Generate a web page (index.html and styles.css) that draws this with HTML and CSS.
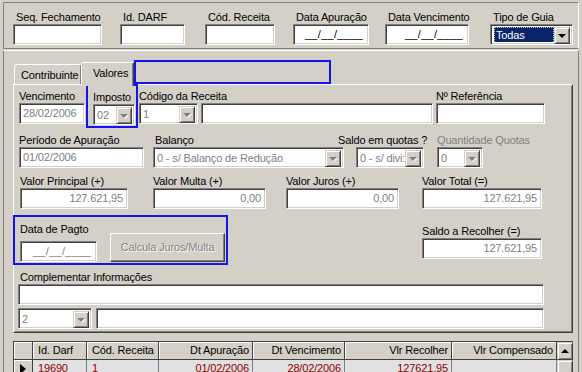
FILE: index.html
```html
<!DOCTYPE html>
<html>
<head>
<meta charset="utf-8">
<link rel="stylesheet" href="styles.css">
</head>
<body>
<div class="top">
  <div class="tf w-seq"><div class="tl">Seq. Fechamento</div><div class="sunk"></div></div>
  <div class="tf w-id"><div class="tl">Id. DARF</div><div class="sunk"></div></div>
  <div class="tf w-cod"><div class="tl">Cód. Receita</div><div class="sunk"></div></div>
  <div class="tf w-dap"><div class="tl">Data Apuração</div><div class="sunk mask">__/__/____</div></div>
  <div class="tf w-dve"><div class="tl">Data Vencimento</div><div class="sunk mask">__/__/____</div></div>
  <div class="tf w-tipo"><div class="tl">Tipo de Guia</div>
    <div class="sunk combo"><div class="cval"><span class="sel">Todas</span></div><div class="cbtn"><i class="arr"></i></div></div>
  </div>
</div>

<div class="main">
  <div class="tabs">
    <div class="tab">Contribuinte</div>
    <div class="tab active">Valores</div>
  </div>
  <div class="page">
    <div class="row r1">
      <div class="fld w-venc pt"><div class="lbl">Vencimento</div><div class="sunk dis">28/02/2006</div></div>
      <div class="bluebox bb1">
        <div class="fld w-imp"><div class="lbl">Imposto</div>
          <div class="sunk combo dis"><div class="cval">02</div><div class="cbtn"><i class="arr off"></i></div></div>
        </div>
      </div>
      <div class="fld w-codr pt"><div class="lbl nw">Código da Receita</div>
        <div class="sunk combo dis"><div class="cval">1</div><div class="cbtn"><i class="arr off"></i></div></div>
      </div>
      <div class="fld w-codt pt"><div class="lbl"></div><div class="sunk"></div></div>
      <div class="fld w-ref pt"><div class="lbl">Nº Referência</div><div class="sunk"></div></div>
    </div>

    <div class="row r2">
      <div class="fld w-per"><div class="lbl">Período de Apuração</div><div class="sunk dis">01/02/2006</div></div>
      <div class="fld w-bal"><div class="lbl l2">Balanço</div>
        <div class="sunk combo dis"><div class="cval">0 - s/ Balanço de Redução</div><div class="cbtn"><i class="arr off"></i></div></div>
      </div>
      <div class="fld w-sq"><div class="lbl nw sql">Saldo em quotas ?</div>
        <div class="sunk combo dis"><div class="cval clip">0 - s/ divi:</div><div class="cbtn"><i class="arr off"></i></div></div>
      </div>
      <div class="fld w-qq"><div class="lbl nw gray">Quantidade Quotas</div>
        <div class="sunk combo dis"><div class="cval">0</div><div class="cbtn"><i class="arr off"></i></div></div>
      </div>
    </div>

    <div class="row r3">
      <div class="fld w-vp"><div class="lbl nw">Valor Principal (+)</div><div class="sunk dis num">127.621,95</div></div>
      <div class="fld w-vm"><div class="lbl nw">Valor Multa (+)</div><div class="sunk dis num">0,00</div></div>
      <div class="fld w-vj"><div class="lbl nw">Valor Juros (+)</div><div class="sunk dis num">0,00</div></div>
      <div class="fld w-vt"><div class="lbl nw">Valor Total (=)</div><div class="sunk dis num">127.621,95</div></div>
    </div>

    <div class="row r4">
      <div class="bluebox bb2">
        <div class="fld w-dp"><div class="lbl dpl">Data de Pagto</div><div class="sunk mask dis">__/__/____</div></div>
        <div class="btn">Calcula Juros/Multa</div>
      </div>
      <div class="fld w-sr"><div class="lbl nw">Saldo a Recolher (=)</div><div class="sunk dis num">127.621,95</div></div>
    </div>

    <div class="row r5">
      <div class="fld w-ci"><div class="lbl nw">Complementar Informações</div><div class="sunk"></div></div>
    </div>

    <div class="row r6">
      <div class="sunk combo dis w-c2"><div class="cval">2</div><div class="cbtn"><i class="arr off"></i></div></div>
      <div class="sunk w-c2t"></div>
    </div>
  </div>

  <div class="grid">
    <div class="hc"></div>
    <div class="hc">Id. Darf</div>
    <div class="hc">Cód. Receita</div>
    <div class="hc rt">Dt Apuração</div>
    <div class="hc rt">Dt Vencimento</div>
    <div class="hc rt">Vlr Recolher</div>
    <div class="hc rt">Vlr Compensado</div>
    <div class="sb-up"><i class="uarr"></i></div>

    <div class="ind"><i class="rarr"></i></div>
    <div class="dc">19690</div>
    <div class="dc">1</div>
    <div class="dc rt">01/02/2006</div>
    <div class="dc rt">28/02/2006</div>
    <div class="dc rt">127621.95</div>
    <div class="dc rt"></div>
    <div class="sb-th"></div>
  </div>
</div>

<div class="blue-over"></div>
</body>
</html>
```

FILE: styles.css
```css
html, body {
  margin: 0;
  padding: 0;
  background: #d4d0c8;
  font-family: "Liberation Sans", Arial, sans-serif;
  font-size: 11px;
  letter-spacing: -0.15px;
  color: #000;
  width: 582px;
  height: 372px;
  overflow: hidden;
  position: relative;
}

/* bevels */
.sunk {
  box-sizing: border-box;
  height: 21px;
  background: #fff;
  border: 1px solid;
  border-color: #808080 #fff #fff #808080;
  box-shadow: inset 1px 1px 0 #404040, inset -1px -1px 0 #d4d0c8;
  padding: 0 3px;
  line-height: 19px;
  white-space: nowrap;
  overflow: hidden;
}
.sunk.dis { color: #808080; }
.sunk.num { text-align: right; padding-right: 4px; }
.sunk.mask { text-align: right; padding-right: 5px; letter-spacing: 0.3px; }

.combo {
  display: flex;
  padding: 2px 2px 2px 3px;
  line-height: 17px;
}
.cval { flex: 1; overflow: hidden; white-space: nowrap; }
.cbtn {
  box-sizing: border-box;
  width: 16px;
  height: 17px;
  background: #d4d0c8;
  border: 1px solid;
  border-color: #d4d0c8 #404040 #404040 #d4d0c8;
  box-shadow: inset 1px 1px 0 #fff, inset -1px -1px 0 #808080;
  display: flex;
  align-items: center;
  justify-content: center;
}
.arr {
  display: block;
  width: 0;
  height: 0;
  border-left: 4px solid transparent;
  border-right: 4px solid transparent;
  border-top: 4px solid #000;
  margin-top: 1px;
}
.arr.off {
  border-top-color: #808080;
  filter: drop-shadow(1px 1px 0 #fff);
}
.sel {
  display: inline-block;
  background: #0a246a;
  color: #fff;
  outline: 1px dotted #c0c0c0;
  outline-offset: -1px;
  width: 100%;
  padding-left: 2px;
  box-sizing: border-box;
  line-height: 17px;
}

/* top panel */
.top {
  box-sizing: border-box;
  margin: 2px 3px 0 3px;
  height: 47px;
  border: 1px solid;
  border-color: #808080 #fff #808080 #808080;
  display: flex;
  align-items: flex-start;
  padding: 7px 0 0 9px;
}
.tf { display: flex; flex-direction: column; }
.tl { height: 14px; line-height: 14px; padding-left: 3px; white-space: nowrap; }
.w-seq { width: 89px; }
.w-id { width: 65px; margin-left: 18px; }
.w-cod { width: 70px; margin-left: 20px; }
.w-dap { width: 76px; margin-left: 18px; }
.w-dve { width: 84px; margin-left: 16px; }
.w-tipo { width: 83px; margin-left: 21px; }

/* main panel */
.main {
  box-sizing: border-box;
  margin: 1px 3px 0 3px;
  height: 330px;
  border-left: 1px solid #808080;
  border-top: 1px solid #fff;
  border-right: 1px solid #808080;
  padding: 11px 5px 0 9px;
}
.tabs {
  display: flex;
  align-items: flex-end;
  height: 22px;
  position: relative;
  z-index: 2;
}
.tab {
  box-sizing: border-box;
  height: 20px;
  width: 68px;
  margin-left: 1px;
  border: 1px solid;
  border-bottom: none;
  border-color: #fff #404040 transparent #fff;
  box-shadow: inset -1px 0 0 #808080;
  border-radius: 2px 2px 0 0;
  padding: 3px 0 0 6px;
  line-height: 14px;
  white-space: nowrap;
  overflow: hidden;
  background: #d4d0c8;
}
.tab.active {
  height: 24px;
  width: 53px;
  margin-left: -1px;
  margin-bottom: -2px;
  padding: 3px 0 0 11px;
}
.page {
  box-sizing: border-box;
  width: 560px;
  height: 249px;
  border: 1px solid;
  border-color: #fff #404040 #404040 #fff;
  box-shadow: inset 1px 1px 0 #d4d0c8, inset -1px -1px 0 #808080;
  padding: 1px 4px 0 5px;
  position: relative;
  z-index: 1;
}
.row { display: flex; align-items: flex-start; }
.fld { display: flex; flex-direction: column; }
.lbl { height: 14px; line-height: 14px; white-space: nowrap; }
.gray { color: #808080; }
.pt { padding-top: 4px; }
.r1 .lbl { height: 13px; line-height: 13px; }

.bluebox {
  border: 2px solid #1414f0;
  box-sizing: border-box;
}
.bb1 {
  margin: -2px 0 0 1px;
  padding: 5px 1px 1px 5px;
}
.w-venc { width: 66px; }
.w-imp { width: 42px; }
.w-codr { width: 59px; margin-left: 1px; }
.w-codt { width: 232px; margin-left: 3px; }
.w-ref { width: 109px; margin-left: 3px; }

.r2 { margin-top: 5px; }
.w-per { width: 125px; }
.w-bal { width: 191px; margin-left: 9px; }
.l2 { padding-left: 2px; }
.w-sq { width: 68px; margin-left: 12px; }
.sql { margin-left: -18px; }
.w-qq { width: 46px; margin-left: 13px; }

.r3 { margin-top: 6px; }
.w-vp { width: 108px; margin-left: 1px; }
.w-vm { width: 113px; margin-left: 25px; }
.w-vj { width: 113px; margin-left: 20px; }
.w-vt { width: 120px; margin-left: 23px; }

.r4 { margin-top: 6px; }
.bb2 {
  display: flex;
  align-items: flex-end;
  margin-left: -6px;
  width: 215px;
  height: 50px;
  padding: 0 1px 1px 5px;
}
.w-dp { width: 77px; }
.dpl { height: 19px; line-height: 14px; }
.btn {
  box-sizing: border-box;
  width: 115px;
  height: 29px;
  margin-left: 13px;
  border: 1px solid;
  border-color: #fff #404040 #404040 #fff;
  box-shadow: inset -1px -1px 0 #808080;
  color: #808080;
  text-shadow: 1px 1px 0 #fff;
  text-align: center;
  line-height: 27px;
  white-space: nowrap;
}
.w-sr { width: 120px; margin-left: 194px; margin-top: 9px; }

.r5 { margin-top: 5px; }
.w-ci { width: 526px; margin-left: -1px; }
.w-ci .lbl { padding-left: 2px; }

.r6 { margin-top: 3px; }
.w-c2 { width: 74px; margin-left: -1px; }
.w-c2t { width: 448px; margin-left: 4px; }

/* grid */
.grid {
  margin-top: 8px;
  width: 560px;
  box-sizing: border-box;
  border-left: 1px solid #404040;
  border-top: 1px solid #404040;
  display: grid;
  grid-template-columns: 19px 54px 72px 94px 92px 107px 105px 16px;
  grid-auto-rows: 18px;
}
.hc {
  box-sizing: border-box;
  background: #d4d0c8;
  border-right: 1px solid #404040;
  border-bottom: 1px solid #404040;
  box-shadow: inset 1px 1px 0 #fff;
  padding: 0 4px 0 5px;
  line-height: 17px;
  white-space: nowrap;
  overflow: hidden;
}
.rt { text-align: right; }
.hc.rt { padding-right: 3px; }
.sb-up, .sb-th {
  box-sizing: border-box;
  background: #d4d0c8;
  border: 1px solid;
  border-color: #d4d0c8 #404040 #404040 #d4d0c8;
  box-shadow: inset 1px 1px 0 #fff, inset -1px -1px 0 #808080;
  display: flex;
  align-items: center;
  justify-content: center;
}
.sb-th { height: 40px; }
.uarr {
  display: block;
  width: 0; height: 0;
  border-left: 4px solid transparent;
  border-right: 4px solid transparent;
  border-bottom: 4px solid #000;
}
.ind {
  box-sizing: border-box;
  background: #d4d0c8;
  border-right: 1px solid #404040;
  border-bottom: 1px solid #404040;
  box-shadow: inset 1px 1px 0 #fff;
  display: flex;
  align-items: center;
  padding-left: 6px;
}
.rarr {
  display: block;
  width: 0; height: 0;
  border-top: 5px solid transparent;
  border-bottom: 5px solid transparent;
  border-left: 6px solid #000;
}
.dc {
  box-sizing: border-box;
  background: #e1e0e3;
  border-right: 1px solid #808080;
  color: #8b0000;
  padding: 0 4px 0 5px;
  line-height: 16px;
  white-space: nowrap;
}
.dc.rt { padding-right: 3px; }

.blue-over {
  position: absolute;
  left: 134px;
  top: 60px;
  width: 197px;
  height: 24px;
  box-sizing: border-box;
  border: 2px solid #1414f0;
  z-index: 5;
}
```
